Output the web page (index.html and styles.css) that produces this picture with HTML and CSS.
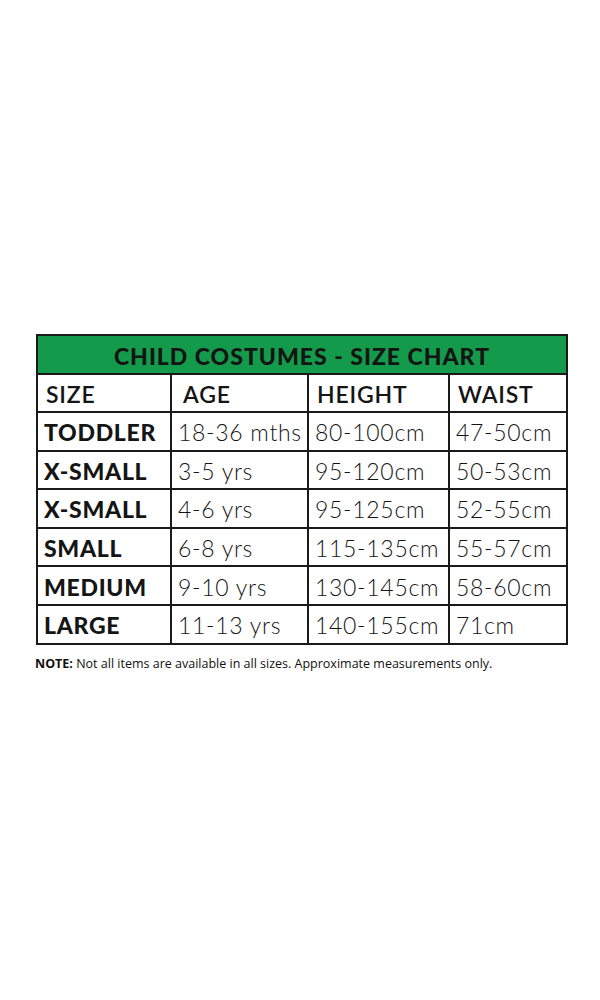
FILE: index.html
```html
<!DOCTYPE html>
<html>
<head>
<meta charset="utf-8">
<link rel="stylesheet" href="styles.css">
</head>
<body>
<div class="page">
  <table class="chart">
    <colgroup>
      <col class="c1"><col class="c2"><col class="c3"><col class="c4">
    </colgroup>
    <tr class="title-row"><th colspan="4">CHILD COSTUMES - SIZE CHART</th></tr>
    <tr class="head-row"><th>SIZE</th><th class="age">AGE</th><th>HEIGHT</th><th>WAIST</th></tr>
    <tr><td class="lbl">TODDLER</td><td>18-36 mths</td><td>80-100cm</td><td>47-50cm</td></tr>
    <tr><td class="lbl">X-SMALL</td><td>3-5 yrs</td><td>95-120cm</td><td>50-53cm</td></tr>
    <tr><td class="lbl">X-SMALL</td><td>4-6 yrs</td><td>95-125cm</td><td>52-55cm</td></tr>
    <tr><td class="lbl">SMALL</td><td>6-8 yrs</td><td>115-135cm</td><td>55-57cm</td></tr>
    <tr><td class="lbl">MEDIUM</td><td>9-10 yrs</td><td>130-145cm</td><td>58-60cm</td></tr>
    <tr><td class="lbl">LARGE</td><td>11-13 yrs</td><td>140-155cm</td><td>71cm</td></tr>
  </table>
  <p class="note"><b>NOTE:</b> Not all items are available in all sizes. Approximate measurements only.</p>
</div>
</body>
</html>
```

FILE: styles.css
```css
html, body {
  margin: 0;
  padding: 0;
  background: #ffffff;
}
.page {
  padding: 334px 0 0 36px;
}
.chart {
  border-collapse: collapse;
  width: 530px;
  table-layout: fixed;
  font-family: Lato, "Open Sans", sans-serif;
  color: #151515;
}
.c1 { width: 134px; }
.c2 { width: 137px; }
.c3 { width: 141px; }
.c4 { width: 118px; }
.chart th, .chart td {
  border: 2px solid #1a1a1a;
  text-align: left;
  padding: 2px 0 0 6px;
  white-space: nowrap;
  box-sizing: border-box;
}
.title-row th {
  background: #139a4a;
  text-align: center;
  font-weight: 900;
  font-size: 23px;
  letter-spacing: 1px;
  height: 39px;
  padding: 2px 0 0 0;
  color: #141414;
}
.head-row th {
  font-weight: 600;
  font-size: 23px;
  letter-spacing: 0.8px;
  height: 38px;
  padding-left: 8px;
}
.head-row th.age { padding-left: 11px; }
.chart td {
  font-weight: 300;
  font-size: 23px;
  letter-spacing: 0.7px;
  height: 38.6px;
}
.chart td.lbl {
  font-weight: 900;
  letter-spacing: 0.7px;
  padding-left: 6px;
}
.note {
  margin: 10px 0 0 -1px;
  font-family: "Open Sans", sans-serif;
  font-size: 12.5px;
  color: #111;
  letter-spacing: 0;
}
.note b { font-weight: 700; }
```
